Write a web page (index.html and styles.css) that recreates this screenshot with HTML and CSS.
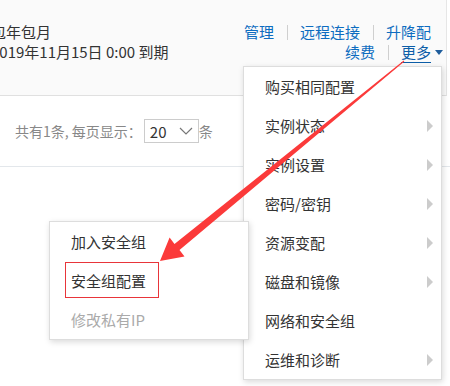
FILE: index.html
```html
<!DOCTYPE html>
<html lang="zh-CN">
<head>
    <meta charset="UTF-8">
    <meta name="viewport" content="width=device-width, initial-scale=1.0">
    <title>实例列表</title>
    <link rel="stylesheet" href="styles.css">
</head>
<body>

    <div class="page">
        <div class="instance-bar">
            <div class="billing">
                <p>包年包月</p>
                <p>2019年11月15日 0:00 到期</p>
            </div>
            <div class="actions">
                <div class="action-row first">
                    <a href="#">管理</a><span class="sep"></span><a href="#">远程连接</a><span class="sep"></span><a href="#">升降配</a>
                </div>
                <div class="action-row">
                    <a href="#">续费</a><span class="sep"></span><a href="#" class="more">更多</a><span class="caret"></span>
                </div>
            </div>
        </div>

        <div class="pager">
            <span>共有1条, 每页显示：</span>
            <div class="page-size">
                <span>20</span>
                <svg width="14" height="8" viewBox="0 0 14 8"><path d="M1 1 L7 7 L13 1" fill="none" stroke="#777" stroke-width="1.2"/></svg>
            </div>
            <span>条</span>
        </div>

        <ul class="menu more-menu">
            <li>购买相同配置</li>
            <li class="has-sub">实例状态</li>
            <li class="has-sub">实例设置</li>
            <li class="has-sub">密码/密钥</li>
            <li class="has-sub">资源变配</li>
            <li class="has-sub">磁盘和镜像</li>
            <li>网络和安全组</li>
            <li class="has-sub">运维和诊断</li>
        </ul>

        <ul class="menu sub-menu">
            <li>加入安全组</li>
            <li><span class="marked">安全组配置</span></li>
            <li class="disabled">修改私有IP</li>
        </ul>

        <!-- annotation arrow -->
        <svg class="pointer" width="450" height="386" viewBox="0 0 450 386">
            <polygon fill="#fb3a3a" points="404.3,61.4 179.5,250.1 184.5,256.4 160,261 169.6,237.6 174.5,243.9 403.7,60.6"/>
        </svg>
    </div>

</body>
</html>
```

FILE: styles.css
```css
body {
    margin: 0;
    font-family: "Noto Sans CJK SC", sans-serif;
    color: #333;
    background-color: #fff;
}
.page {
    position: relative;
    width: 450px;
    height: 386px;
    overflow: hidden;
}
.instance-bar {
    display: flex;
    justify-content: space-between;
    height: 96px;
    padding: 22px 8px 0 0;
    box-sizing: border-box;
    background-color: #fafafa;
    border-bottom: 1px solid #e0e0e0;
    border-right: 1px solid #e6e6e6;
    width: 447px;
}
.billing {
    margin-left: -9px;
    font-size: 15px;
}
.billing p {
    margin: 0;
    line-height: 20px;
}
.actions {
    font-size: 15px;
    text-align: right;
    margin-right: -5px;
}
.action-row {
    display: flex;
    justify-content: flex-end;
    align-items: center;
    height: 20px;
}
.action-row.first {
    margin-right: 12px;
}
.action-row a {
    color: #0d6cc0;
    text-decoration: none;
    line-height: 20px;
}
.action-row .more {
    text-decoration: underline;
    text-underline-offset: 4px;
    text-decoration-thickness: 1px;
    color: #0d5ea8;
}
.sep {
    display: inline-block;
    width: 1px;
    height: 15px;
    margin: 0 12px 0 13px;
    background-color: #cfcfcf;
}
.caret {
    display: inline-block;
    margin-left: 4px;
    border-left: 4.5px solid transparent;
    border-right: 4.5px solid transparent;
    border-top: 5px solid #1f5d9c;
}
.pager {
    display: flex;
    align-items: center;
    height: 71px;
    padding-left: 15px;
    box-sizing: border-box;
    font-size: 14px;
    color: #888;
    border-bottom: 1px solid #e3e7eb;
}
.page-size {
    display: flex;
    align-items: center;
    justify-content: space-between;
    width: 55px;
    height: 24px;
    padding: 0 5px;
    margin-left: 2px;
    box-sizing: border-box;
    border: 1px solid #ccc;
    background-color: #fff;
    color: #333;
    font-size: 15px;
}
.menu {
    position: absolute;
    margin: 0;
    padding: 0;
    list-style: none;
    background-color: #fff;
    border: 1px solid #ddd;
    box-shadow: 1px 2px 6px rgba(0, 0, 0, 0.15);
    font-size: 15px;
}
.menu li {
    display: flex;
    align-items: center;
    justify-content: space-between;
    height: 39px;
}
.more-menu {
    left: 243px;
    top: 66px;
    width: 197px;
}
.more-menu li {
    padding: 0 8px 0 21px;
}
.has-sub::after {
    content: "";
    border-top: 6px solid transparent;
    border-bottom: 6px solid transparent;
    border-left: 6px solid #ccc;
}
.sub-menu {
    left: 49px;
    top: 221px;
    width: 198px;
}
.sub-menu li {
    padding-left: 21px;
}
.sub-menu .disabled {
    color: #aaa;
}
.marked {
    position: relative;
}
.marked::after {
    content: "";
    position: absolute;
    left: -6px;
    right: -13px;
    top: -8px;
    bottom: -7px;
    border: 1px solid #e8353a;
}
.pointer {
    position: absolute;
    left: 0;
    top: 0;
    pointer-events: none;
}
```
